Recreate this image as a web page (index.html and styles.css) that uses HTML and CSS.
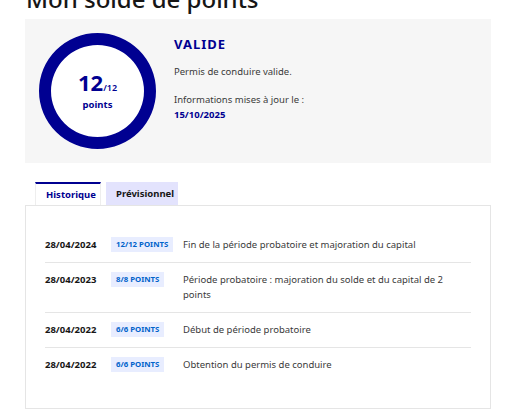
FILE: index.html
```html
<!DOCTYPE html>
<html lang="fr">
<head>
    <meta charset="UTF-8">
    <meta name="viewport" content="width=device-width, initial-scale=1.0">
    <title>Mon solde de points</title>
    <link rel="stylesheet" href="styles.css">
</head>
<body>

<div class="page">
    <h1>Mon solde de points</h1>

    <div class="solde">
        <div class="ring">
            <div class="count"><span class="big">12</span><span class="max">/12</span></div>
            <div class="unit">points</div>
        </div>
        <div class="status">
            <h2>VALIDE</h2>
            <p>Permis de conduire valide.</p>
            <p class="maj">Informations mises à jour le :<br><strong>15/10/2025</strong></p>
        </div>
    </div>

    <div class="tabs">
        <button class="tab active">Historique</button>
        <button class="tab">Prévisionnel</button>
    </div>

    <div class="panel">
        <div class="row">
            <span class="date">28/04/2024</span>
            <span class="cell"><span class="badge">12/12 points</span></span>
            <span class="label">Fin de la période probatoire et majoration du capital</span>
        </div>
        <div class="row">
            <span class="date">28/04/2023</span>
            <span class="cell"><span class="badge">8/8 points</span></span>
            <span class="label">Période probatoire : majoration du solde et du capital de 2 points</span>
        </div>
        <div class="row">
            <span class="date">28/04/2022</span>
            <span class="cell"><span class="badge">6/6 points</span></span>
            <span class="label">Début de période probatoire</span>
        </div>
        <div class="row">
            <span class="date">28/04/2022</span>
            <span class="cell"><span class="badge">6/6 points</span></span>
            <span class="label">Obtention du permis de conduire</span>
        </div>
    </div>
</div>

</body>
</html>
```

FILE: styles.css
```css
body {
    margin: 0;
    font-family: "Noto Sans", "Open Sans", sans-serif;
    color: #3a3a3a;
    background: #fff;
}
.page {
    width: 466px;
    margin-left: 25px;
}
h1 {
    font-size: 24px;
    line-height: 30px;
    font-weight: 500;
    color: #161616;
    margin: -16px 0 5px 1px;
}
.solde {
    display: flex;
    gap: 18px;
    background-color: #f6f6f6;
    height: 144px;
    padding: 14px 14px 0 14px;
    box-sizing: border-box;
}
.ring {
    width: 117px;
    height: 116px;
    box-sizing: border-box;
    border: 12px solid #000091;
    border-radius: 50%;
    background: #fff;
    color: #000091;
    display: flex;
    flex-direction: column;
    align-items: center;
    justify-content: center;
    padding-top: 1px;
}
.count {
    line-height: 22px;
    font-weight: 700;
}
.big {
    font-size: 22px;
}
.max {
    font-size: 9px;
    font-weight: 600;
}
.unit {
    font-size: 9.5px;
    font-weight: 700;
    line-height: 14px;
    margin-top: -1px;
}
.status {
    padding-top: 2px;
}
.status h2 {
    margin: 0;
    font-size: 13px;
    line-height: 18px;
    letter-spacing: 1px;
    color: #000091;
    font-weight: 700;
}
.status p {
    margin: 11px 0 0;
    font-size: 9.5px;
    line-height: 15px;
}
.status p.maj {
    margin-top: 13px;
}
.status strong {
    color: #000091;
    font-weight: 700;
}
.tabs {
    display: flex;
    gap: 5px;
    margin: 19px 0 0 10px;
}
.tab {
    font-family: inherit;
    font-size: 9.5px;
    font-weight: 700;
    color: #161616;
    height: 23px;
    padding: 0 10px;
    border: none;
    background-color: #e3e3fd;
    cursor: pointer;
}
.tab.active {
    width: 66px;
    background: #fff;
    color: #000091;
    border-top: 2px solid #000091;
    border-left: 1px solid #eee;
    border-right: 1px solid #eee;
}
.tab:not(.active) {
    width: 72px;
}
.panel {
    border: 1px solid #e5e5e5;
    padding: 22px 19px 26px;
}
.row {
    display: grid;
    grid-template-columns: 66px 73px 1fr;
    align-items: start;
    padding: 9px 0 10px;
    font-size: 9.5px;
    line-height: 15px;
    border-bottom: 1px solid #e5e5e5;
}
.row:last-child {
    border-bottom: none;
}
.date {
    font-weight: 700;
    color: #161616;
}
.label {
    margin-left: -1px;
}
.badge {
    display: inline-block;
    vertical-align: top;
    background-color: #e8edff;
    color: #0063cb;
    font-size: 7.8px;
    font-weight: 700;
    text-transform: uppercase;
    line-height: 15px;
    padding: 0 5px;
}
```
